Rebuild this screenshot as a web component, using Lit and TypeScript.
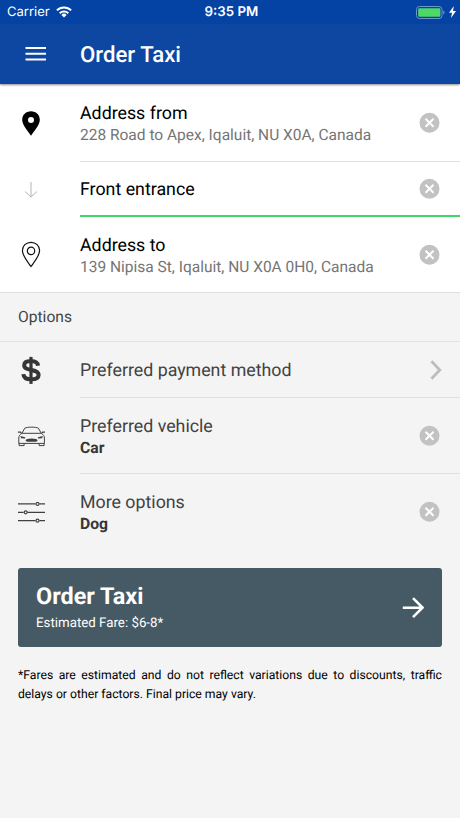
import { LitElement, html, svg, css, nothing } from "lit";
import { customElement, property } from "lit/decorators.js";

const icons: Record<string, unknown> = {
  pin: svg`<svg width="18" height="26" viewBox="0 0 18 26"><path fill="#000" fill-rule="evenodd" d="M9 1.300C4 1.300.2 4.800.2 9.800c0 5.200 5.300 10.900 8.800 16C12.500 20.700 17.800 15 17.800 9.800 17.800 4.800 14 1.300 9 1.300zm0 5.700a3 3 0 1 1 0 6 3 3 0 0 1 0-6z"/></svg>`,
  down: svg`<svg width="14" height="17" viewBox="0 0 14 17" fill="none" stroke="#b3b3b3"><path d="M7 1v15M1 10.500l6 5.500 6-5.500"/></svg>`,
  pinOutline: svg`<svg width="20" height="27" viewBox="0 0 20 27" fill="none" stroke="#111" stroke-width="1.200"><path d="M10 1.300C5.100 1.300 1.400 4.900 1.400 9.500c0 5.200 5.200 11.200 8.600 16 3.400-4.800 8.600-10.800 8.600-16C18.600 4.900 14.900 1.300 10 1.300z"/><circle cx="10" cy="9.900" r="3.700"/></svg>`,
  dollar: svg`<svg width="20" height="28" viewBox="0 0 20 28" fill="none" stroke="#363636"><path stroke-width="4" d="M17 9.800C16.700 6.600 14.200 5.100 10 5.100c-4 0-6.800 1.500-6.800 4.300 0 6.200 14.400 3 14.400 9.500 0 3-3.200 4.400-7.400 4.400-4.600 0-7.600-1.700-7.800-5.200"/><path stroke-width="3.200" d="M10 .9v27"/></svg>`,
  car: svg`<svg width="28" height="21" viewBox="0 0 28 21" fill="none" stroke="#404040" stroke-width="1"><g transform="translate(.6 0)"><path d="M4.300 7.300 7.200 2.200C9.500.8 18.500.8 20.800 2.200l2.900 5.100M4.300 7.300h19.400M4.300 7.300C2.300 8.600 1.200 10 1.200 12v5.400h25.600V12c0-2-1.100-3.400-3.100-4.700M1.500 17.400v2.200h5v-2.200M21.500 17.400v2.200h5v-2.200"/><path d="M.3 6.200h2.600l.8 1M27.700 6.200h-2.600l-.8 1" stroke-width="1.300"/><path fill="#404040" stroke="none" d="M2.800 10l4.800 1.300v1.300l-4.200-.4zM25.200 10l-4.800 1.300v1.300l4.200-.4zM9.500 13Q14 12 18.500 13l1.700 1.300-1.500 1.500H9.300l-1.500-1.500z"/></g></svg>`,
  sliders: svg`<svg width="28" height="21" viewBox="-1 0 28 21" fill="none" stroke="#404040" stroke-width="1.200"><path d="M0 1.900h17.600M21.400 1.900H27M0 10.300h5.600M9.400 10.300H27M0 18.700h17.600M21.400 18.700H27"/><circle cx="19.500" cy="1.900" r="1.500"/><circle cx="7.700" cy="10.300" r="1.500"/><circle cx="19.500" cy="18.700" r="1.500"/></svg>`,
  clear: svg`<svg width="21" height="20" viewBox="0 0 21 20"><circle cx="10.500" cy="9.800" r="10" fill="#c2c2c2"/><path d="M6.500 5.800l8 8M14.500 5.800l-8 8" stroke="#fff" stroke-width="2"/></svg>`,
  chevron: svg`<svg width="12" height="20" viewBox="0 0 12 20" fill="none" stroke="#bdbdbd" stroke-width="2.800"><path d="M1.500 1.200 9.800 10l-8.300 8.800"/></svg>`,
};

@customElement("order-row")
class OrderRow extends LitElement {
  @property() icon = "";
  @property() label = "";
  @property() detail = "";
  @property() action = "clear";
  static styles = css`
    :host { display: flex; box-sizing: border-box; }
    .icon { width: 62px; flex: none; display: flex; align-items: center; justify-content: center; margin-right: 18px; }
    .body { flex: 1; display: flex; align-items: center; border-bottom: var(--line, 1px solid #e0e0e0); }
    .text { flex: 1; padding-top: var(--nudge, 0px); }
    .label { font-size: 17.800px; line-height: 24px; color: var(--label, #000); }
    .detail { font-size: var(--detail-size, 15.500px); line-height: 18px; color: var(--detail, #757575); font-weight: var(--detail-weight, 400); white-space: nowrap; }
    .action { display: flex; margin-right: 20px; }
    .clear svg { overflow: visible; }
    .chevron { margin-right: 18px; }
  `;
  render() {
    return html`
      <div class="icon">${icons[this.icon]}</div>
      <div class="body">
        <div class="text">
          <div class="label">${this.label}</div>
          ${this.detail ? html`<div class="detail">${this.detail}</div>` : nothing}
        </div>
        <div class="action ${this.action}">${icons[this.action]}</div>
      </div>`;
  }
}

@customElement("app-root")
class AppRoot extends LitElement {
  static styles = css`
    :host { display: block; height: 818px; overflow: hidden; background: #f4f4f4; font-family: Roboto, sans-serif; text-rendering: geometricPrecision; }
    .top { position: relative; height: 84px; background: #0d47a1; color: #fff; box-shadow: 0 1px 2px rgba(0,0,0,.45); }
    .status { display: grid; grid-template-columns: 1fr auto 1fr; align-items: center; height: 24px; background: #0443a4; font: 13px/24px Inter, sans-serif; padding: 0 4px 0 7px; }
    .left, .right { display: flex; align-items: center; gap: 6px; }
    .right { justify-content: flex-end; gap: 4px; }
    .time { font-weight: 600; font-size: 13.300px; }
    .bar { display: flex; align-items: center; height: 60px; padding-left: 25px; }
    .title { margin-left: 34px; padding-top: 2px; font-size: 22.200px; font-weight: 500; }
    .addresses { background: #fff; border-bottom: 1px solid #dedede; }
    .from { height: 78px; --nudge: 1px; }
    .entrance { height: 55px; --line: 2px solid #3fd568; --nudge: 3px; }
    .to { height: 75px; --line: 0; }
    .heading { height: 48px; line-height: 49px; padding-left: 18px; font-size: 15.600px; color: #444; border-bottom: 1px solid #e2e2e2; }
    .options { --label: #424242; --detail: #363636; --detail-weight: 700; --detail-size: 15.700px; }
    .payment { height: 56px; --nudge: 2px; }
    .vehicle { height: 76px; }
    .more { height: 76px; --line: 0; }
    .order { display: flex; align-items: center; box-sizing: border-box; margin: 18px 18px 0; height: 79px; padding: 0 18px; border-radius: 3px; background: #455a64; color: #fff; }
    .order-text { flex: 1; padding-top: 4px; }
    .order-title { font-size: 23.400px; font-weight: 700; line-height: 27px; }
    .fare { font-size: 13.300px; line-height: 27px; }
    .note { margin: 19px 18px 0; font-size: 12.200px; line-height: 19px; text-align: justify; color: #000; }
  `;
  render() {
    return html`
      <header class="top">
        <div class="status">
          <div class="left"><span>Carrier</span>
            <svg width="16" height="12" viewBox="0 0 16 12" fill="none" stroke="#fff" stroke-width="2"><path d="M.9 4.400a10.200 10.200 0 0 1 14.200 0M3.700 7.200a6.200 6.200 0 0 1 8.600 0"/><path fill="#fff" stroke="none" d="M8 11.500 5.400 8.900a3.700 3.700 0 0 1 5.200 0z"/></svg>
          </div>
          <div class="time">9:35 PM</div>
          <div class="right">
            <svg width="29" height="13" viewBox="0 0 29 13"><rect x=".5" y=".5" width="25.500" height="12" rx="3" fill="none" stroke="#6f93cc"/><rect x="2.200" y="2.200" width="22.200" height="8.600" rx="1.200" fill="#4cd964"/><path fill="#6f93cc" d="M27.200 4.500c1.800.7 1.800 3.300 0 4z"/></svg>
            <svg width="7" height="12" viewBox="0 0 7 12"><path fill="#fff" d="M4.800 0 0 6.800h3L2 12l5-7H4z"/></svg>
          </div>
        </div>
        <div class="bar">
          <svg width="21" height="14" viewBox="0 0 21 14" fill="#fff"><path d="M.5 0h20.500v2H.5zM.5 5.800h20.500v2H.5zM.5 11.600h20.500v2H.5z"/></svg>
          <div class="title">Order Taxi</div>
        </div>
      </header>
      <section class="addresses">
        <order-row class="from" icon="pin" label="Address from" detail="228 Road to Apex, Iqaluit, NU X0A, Canada"></order-row>
        <order-row class="entrance" icon="down" label="Front entrance"></order-row>
        <order-row class="to" icon="pinOutline" label="Address to" detail="139 Nipisa St, Iqaluit, NU X0A 0H0, Canada"></order-row>
      </section>
      <div class="heading">Options</div>
      <section class="options">
        <order-row class="payment" icon="dollar" label="Preferred payment method" action="chevron"></order-row>
        <order-row class="vehicle" icon="car" label="Preferred vehicle" detail="Car"></order-row>
        <order-row class="more" icon="sliders" label="More options" detail="Dog"></order-row>
      </section>
      <div class="order">
        <div class="order-text">
          <div class="order-title">Order Taxi</div>
          <div class="fare">Estimated Fare: $6-8*</div>
        </div>
        <svg width="22" height="22" viewBox="0 0 22 22" fill="none" stroke="#fff" stroke-width="2.600"><path d="M.8 10.700h19M11 1.200l9.500 9.500-9.500 9.500"/></svg>
      </div>
      <div class="note">*Fares are estimated and do not reflect variations due to discounts, traffic delays or other factors. Final price may vary.</div>
    `;
  }
}
